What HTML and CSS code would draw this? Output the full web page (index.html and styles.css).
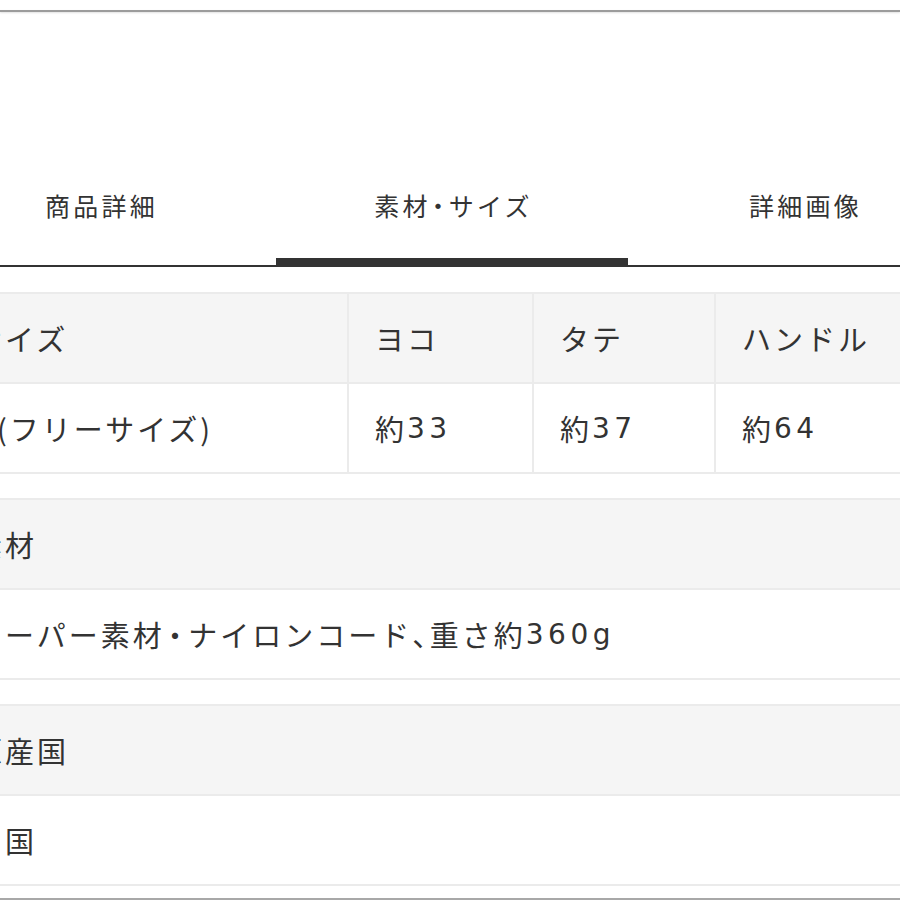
FILE: index.html
```html
<!DOCTYPE html>
<html lang="ja">
<head>
<meta charset="utf-8">
<title>素材・サイズ</title>
<link rel="stylesheet" href="styles.css">
</head>
<body>
<div class="page">
  <div class="topline"></div>
  <nav class="tabs">
    <div class="tab">商品詳細</div>
    <div class="tab active">素材<span class="mid">・</span>サイズ</div>
    <div class="tab">詳細画像</div>
  </nav>

  <div class="spec spec-size">
    <div class="spec-row">
      <div class="cell head">サイズ</div>
      <div class="cell head">ヨコ</div>
      <div class="cell head">タテ</div>
      <div class="cell head">ハンドル</div>
    </div>
    <div class="spec-row">
      <div class="cell cell-free">(フリーサイズ)</div>
      <div class="cell">約<span class="num">33</span></div>
      <div class="cell">約<span class="num">37</span></div>
      <div class="cell">約<span class="num">64</span></div>
    </div>
  </div>

  <div class="spec spec-single">
    <div class="spec-row">
      <div class="cell head">素材</div>
    </div>
    <div class="spec-row">
      <div class="cell">スーパー素材<span class="mid">・</span>ナイロンコード<span class="comma">、</span>重さ約<span class="num">360g</span></div>
    </div>
  </div>

  <div class="spec spec-single">
    <div class="spec-row">
      <div class="cell head">原産国</div>
    </div>
    <div class="spec-row">
      <div class="cell">中国</div>
    </div>
  </div>

  <div class="bottomline"></div>
</div>
</body>
</html>
```

FILE: styles.css
```css
html, body {
  margin: 0;
  padding: 0;
  background: #fff;
}

body {
  width: 900px;
  height: 900px;
  overflow: hidden;
  font-family: "Noto Sans CJK JP", "Noto Sans", sans-serif;
  color: #333;
}

.page {
  display: flex;
  flex-direction: column;
  padding-top: 10px;
}

.topline {
  height: 2px;
  background: #9c9c9c;
  box-shadow: 0 1px 2px rgba(0, 0, 0, 0.12);
}

.tabs {
  display: grid;
  grid-template-columns: repeat(3, 352px);
  width: 1056px;
  margin-left: -76px;
  border-bottom: 2px solid #333;
}

.tab {
  text-align: center;
  font-size: 25px;
  line-height: 36px;
  letter-spacing: 3.3px;
  padding: 175px 0 42px 3px;
  color: #333;
}

.tab .mid {
  font-feature-settings: "halt";
  padding: 0 1px;
}

.tab.active {
  box-shadow: inset 0 -7px 0 #333;
}

.spec {
  width: 1010px;
  margin-left: -53px;
  margin-top: 24px;
  border-top: 2px solid #ebebeb;
  border-bottom: 2px solid #ebebeb;
}

.spec-size {
  margin-top: 25px;
}

.spec-row {
  display: grid;
  grid-template-columns: 1fr;
}

.spec-size .spec-row {
  grid-template-columns: 400px 185px 182px 1fr;
}

.spec-row + .spec-row {
  border-top: 2px solid #ebebeb;
}

.cell {
  box-sizing: border-box;
  height: 88px;
  display: flex;
  align-items: center;
  padding-left: 26px;
  font-size: 29px;
  letter-spacing: 3px;
  white-space: nowrap;
  color: #333;
}

.cell-free {
  padding-left: 50px;
}

.cell .num {
  font-family: "DejaVu Sans", "Noto Sans", sans-serif;
  font-size: 28px;
  letter-spacing: 4.5px;
}

.cell .mid {
  font-feature-settings: "halt";
  padding: 0 3px;
}

.cell .comma {
  font-feature-settings: "halt";
}

.cell + .cell {
  border-left: 2px solid #ebebeb;
}

.cell.head {
  background: #f5f5f5;
}

.bottomline {
  margin-top: 12px;
  height: 2px;
  background: #a8a8a8;
}
```
